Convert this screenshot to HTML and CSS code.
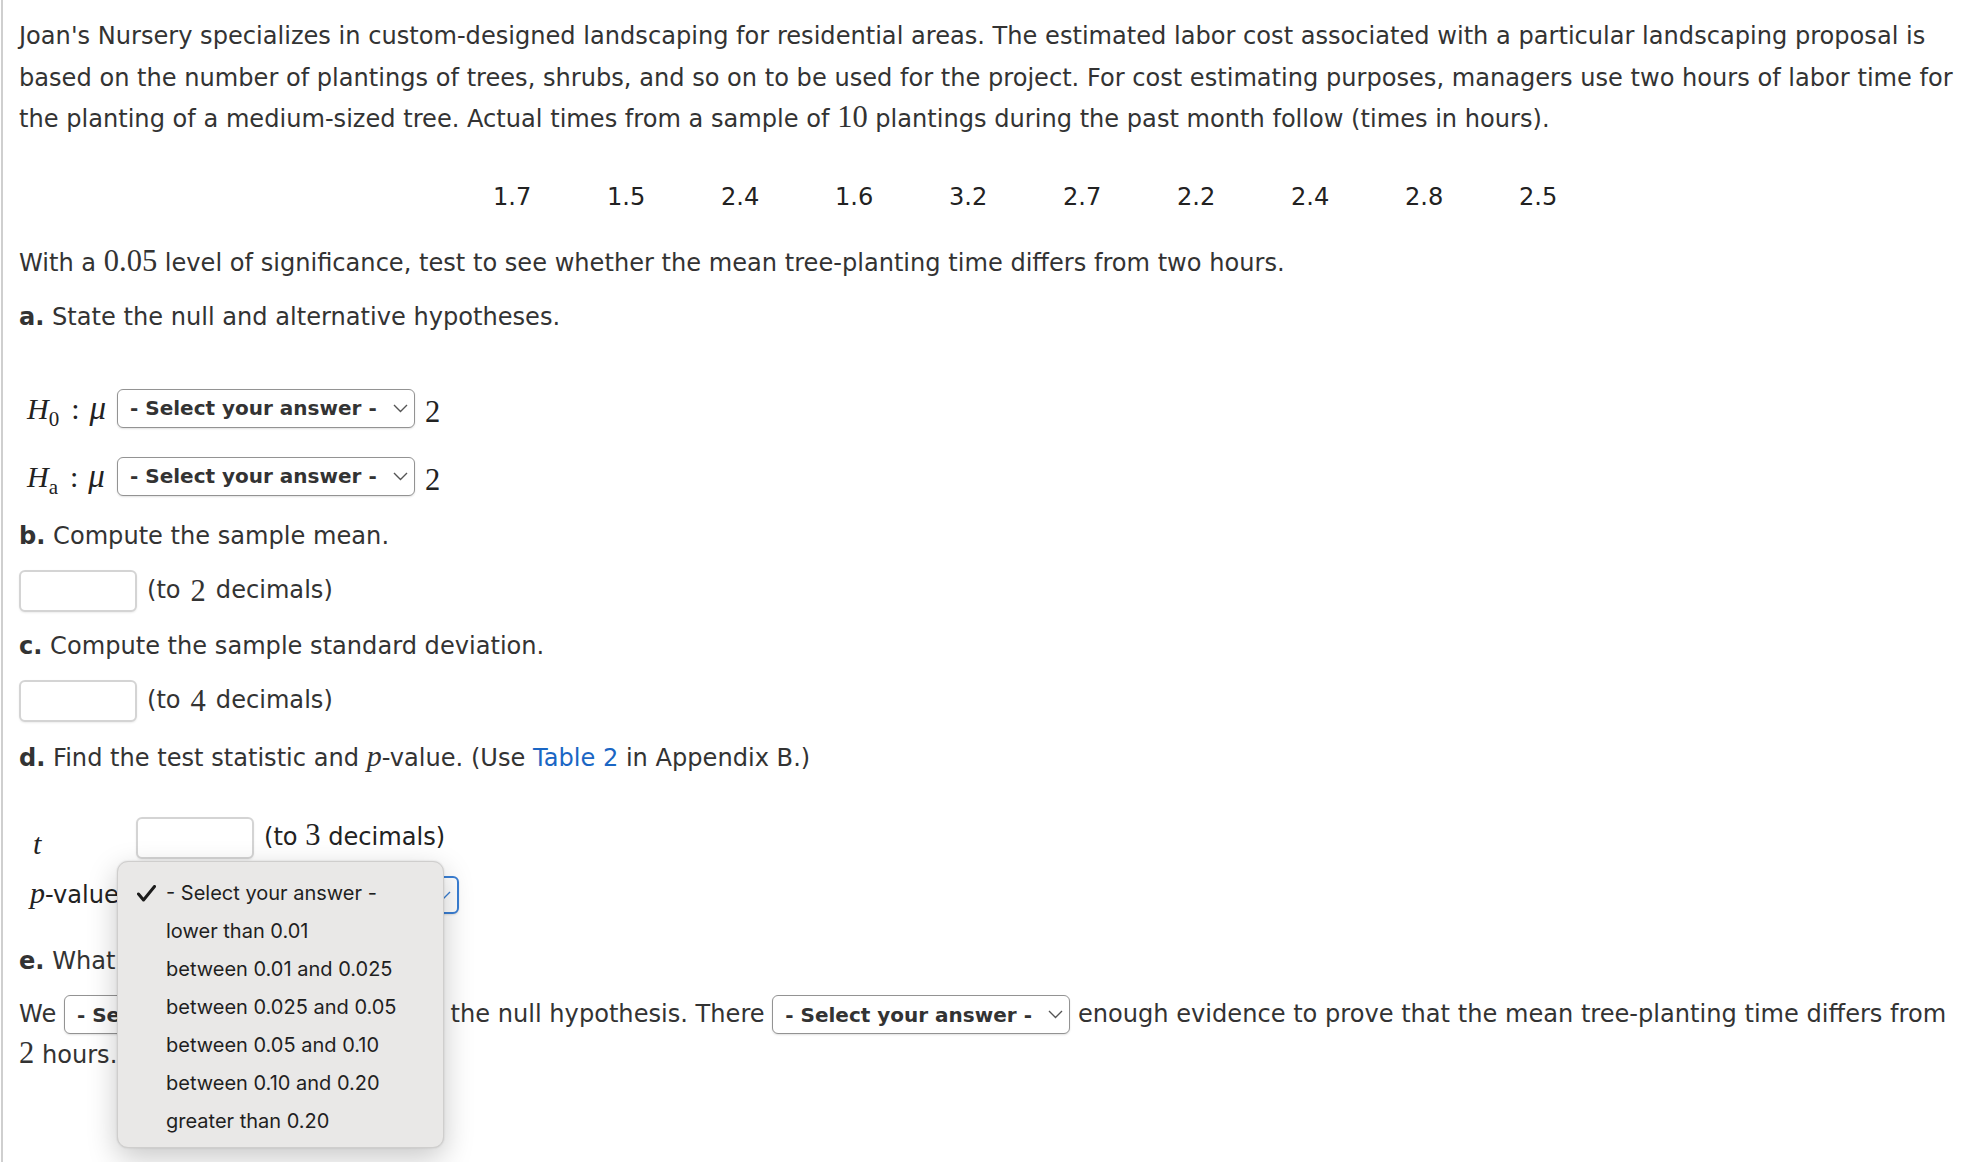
FILE: index.html
```html
<!DOCTYPE html>
<html lang="en">
<head>
    <meta charset="UTF-8">
    <title>Hypothesis Test - Tree Planting</title>
    <link rel="stylesheet" href="styles.css">
</head>
<body>
    <div class="page">
        <p class="intro">Joan's Nursery specializes in custom-designed landscaping for residential areas. The estimated labor cost associated with a particular landscaping proposal is based on the number of plantings of trees, shrubs, and so on to be used for the project. For cost estimating purposes, managers use two hours of labor time for the planting of a medium-sized tree. Actual times from a sample of <span class="num">10</span> plantings during the past month follow (times in hours).</p>

        <div class="data">
            <span>1.7</span>
            <span>1.5</span>
            <span>2.4</span>
            <span>1.6</span>
            <span>3.2</span>
            <span>2.7</span>
            <span>2.2</span>
            <span>2.4</span>
            <span>2.8</span>
            <span>2.5</span>
        </div>

        <p class="lead">With a <span class="num">0.05</span> level of significance, test to see whether the mean tree-planting time differs from two hours.</p>

        <p class="part part-a"><b>a.</b> State the null and alternative hypotheses.</p>

        <div class="hyp">
            <div class="hyp-row">
                <span class="hyp-label math"><i>H</i><sub>0</sub><span class="rel">:</span><i class="mu">μ</i></span>
                <span class="select">- Select your answer - <svg width="15" height="9" viewBox="0 0 15 9"><polyline points="1,1 7.5,7.5 14,1" fill="none" stroke="#555" stroke-width="1.4"/></svg></span>
                <span class="num">2</span>
            </div>
            <div class="hyp-row">
                <span class="hyp-label math"><i>H</i><sub>a</sub><span class="rel">:</span><i class="mu">μ</i></span>
                <span class="select">- Select your answer - <svg width="15" height="9" viewBox="0 0 15 9"><polyline points="1,1 7.5,7.5 14,1" fill="none" stroke="#555" stroke-width="1.4"/></svg></span>
                <span class="num">2</span>
            </div>
        </div>

        <p class="part part-b"><b>b.</b> Compute the sample mean.</p>
        <div class="answer"><span class="box"></span> (to <span class="num">2</span> decimals)</div>

        <p class="part part-c"><b>c.</b> Compute the sample standard deviation.</p>
        <div class="answer"><span class="box"></span> (to <span class="num">4</span> decimals)</div>

        <p class="part part-d"><b>d.</b> Find the test statistic and <i class="math">p</i>-value. (Use <a href="#">Table 2</a> in Appendix B.)</p>

        <div class="stats">
            <div class="stat-row">
                <span class="stat-label t-label"><i class="math">t</i></span>
                <span class="box"></span>
                <span class="after">(to <span class="num">3</span> decimals)</span>
            </div>
            <div class="stat-row pv-row">
                <span class="stat-label"><i class="math">p</i>-value</span>
                <span class="select select-focus">- Select your answer - <svg width="15" height="9" viewBox="0 0 15 9"><polyline points="1,1 7.5,7.5 14,1" fill="none" stroke="#3a7fd4" stroke-width="1.4"/></svg></span>

                <ul class="popup">
                    <li class="checked"><svg class="check" width="19" height="17" viewBox="0 0 19 17"><polyline points="1.5,9 6.5,15 17.5,1.5" fill="none" stroke="#1c1c1c" stroke-width="3" stroke-linecap="round" stroke-linejoin="round"/></svg>- Select your answer -</li>
                    <li>lower than 0.01</li>
                    <li>between 0.01 and 0.025</li>
                    <li>between 0.025 and 0.05</li>
                    <li>between 0.05 and 0.10</li>
                    <li>between 0.10 and 0.20</li>
                    <li>greater than 0.20</li>
                </ul>
            </div>
        </div>

        <p class="part part-e"><b>e.</b> What is your conclusion?</p>

        <p class="conclusion">We <span class="select select-wide">- Select your answer - <svg width="15" height="9" viewBox="0 0 15 9"><polyline points="1,1 7.5,7.5 14,1" fill="none" stroke="#555" stroke-width="1.4"/></svg></span> the null hypothesis. There <span class="select">- Select your answer - <svg width="15" height="9" viewBox="0 0 15 9"><polyline points="1,1 7.5,7.5 14,1" fill="none" stroke="#555" stroke-width="1.4"/></svg></span> enough evidence to prove that the mean tree-planting time differs from <span class="num">2</span> hours.</p>
    </div>
</body>
</html>
```

FILE: styles.css
```css
* {
    box-sizing: border-box;
}

body {
    margin: 0;
    background-color: #fff;
    color: #333;
    font-family: "DejaVu Sans", Verdana, sans-serif;
    font-size: 24.1px;
    line-height: 41.5px;
}

.page {
    position: relative;
    min-height: 1162px;
    margin-left: 1px;
    border-left: 2px solid #cfcfcf;
    padding: 16px 5px 40px 16px;
}

p {
    margin: 0;
}

b {
    font-weight: bold;
}

a {
    color: #1a66c4;
    text-decoration: none;
}

.num {
    font-family: "Liberation Serif", "Times New Roman", serif;
    font-size: 30.5px;
    line-height: 1;
}

.math {
    font-family: "Liberation Serif", "Times New Roman", serif;
    font-size: 30px;
    line-height: 1;
}

.math sub {
    font-size: 21px;
    font-style: normal;
    line-height: 0;
}

.rel {
    padding: 0 10px 0 12px;
}

.mu {
    font-size: 33px;
}

/* data row */
.data {
    display: flex;
    margin-top: 36.5px;
    padding-left: 474px;
    color: #222;
}

.data span {
    width: 114px;
}

.lead {
    margin-top: 24px;
}

.part {
    margin-top: 13px;
}

.part-a {
    margin-top: 12.5px;
}

.part-b {
    margin-top: 14.25px;
}

.part-c {
    margin-top: 13.5px;
}

.part-d {
    margin-top: 15.5px;
}

/* hypotheses */
.hyp {
    margin-top: 45px;
    display: flex;
    flex-direction: column;
    gap: 18.25px;
}

.hyp-row {
    display: flex;
    align-items: center;
    height: 50px;
}

.hyp-label {
    width: 98px;
    padding-left: 8px;
    color: #222;
}

.hyp-row .num {
    margin-left: 10px;
    margin-top: 8px;
    color: #222;
}

/* select look-alike */
.select {
    display: inline-flex;
    align-items: center;
    justify-content: space-between;
    width: 298px;
    height: 39px;
    padding: 0 6px 0 12px;
    border: 1.5px solid #939393;
    border-radius: 6px;
    background-color: #fff;
    font-size: 20px;
    font-weight: bold;
    line-height: 1;
    color: #333;
    vertical-align: middle;
    box-shadow: 0 1px 2px rgba(0, 0, 0, 0.12);
}

.select-wide {
    width: 379px;
}

.select-focus {
    width: 323px;
    height: 38px;
    border: 2px solid #3a7fd4;
}

/* answer boxes */
.answer {
    display: flex;
    align-items: center;
    gap: 10px;
    margin-top: 13px;
    height: 42px;
}

.box {
    display: inline-block;
    width: 118px;
    height: 42px;
    border: 2px solid #d4d4d4;
    border-radius: 6px;
    background-color: #fff;
    box-shadow: 0 1px 2px rgba(0, 0, 0, 0.08);
}

/* test statistic */
.stats {
    margin-top: 37.5px;
    display: flex;
    flex-direction: column;
    gap: 17.75px;
}

.stat-row {
    display: flex;
    align-items: center;
    height: 42px;
}

.pv-row {
    position: relative;
    height: 38px;
}

.stat-label {
    width: 117px;
    padding-left: 11px;
    color: #222;
}

.t-label {
    margin-top: 18px;
    padding-left: 14px;
}

.stat-row .after {
    margin-left: 10px;
    color: #222;
}

/* open dropdown menu */
.popup {
    position: absolute;
    left: 98px;
    top: -15px;
    width: 327px;
    height: 287px;
    margin: 0;
    padding: 12px 0 0 48px;
    list-style: none;
    background-color: #e9e8e7;
    border: 1px solid #cfcecd;
    border-radius: 11px;
    box-shadow: 0 10px 30px rgba(0, 0, 0, 0.22), 0 0 2px rgba(0, 0, 0, 0.15);
    font-family: Inter, "Noto Sans", sans-serif;
    font-size: 20px;
    line-height: 38px;
    color: #1f1f1f;
}

.popup li {
    position: relative;
    height: 38px;
}

.popup .check {
    position: absolute;
    left: -29px;
    top: 11px;
}

.part-e {
    margin-top: 26.5px;
}

.conclusion {
    margin-top: 11.5px;
}
```
